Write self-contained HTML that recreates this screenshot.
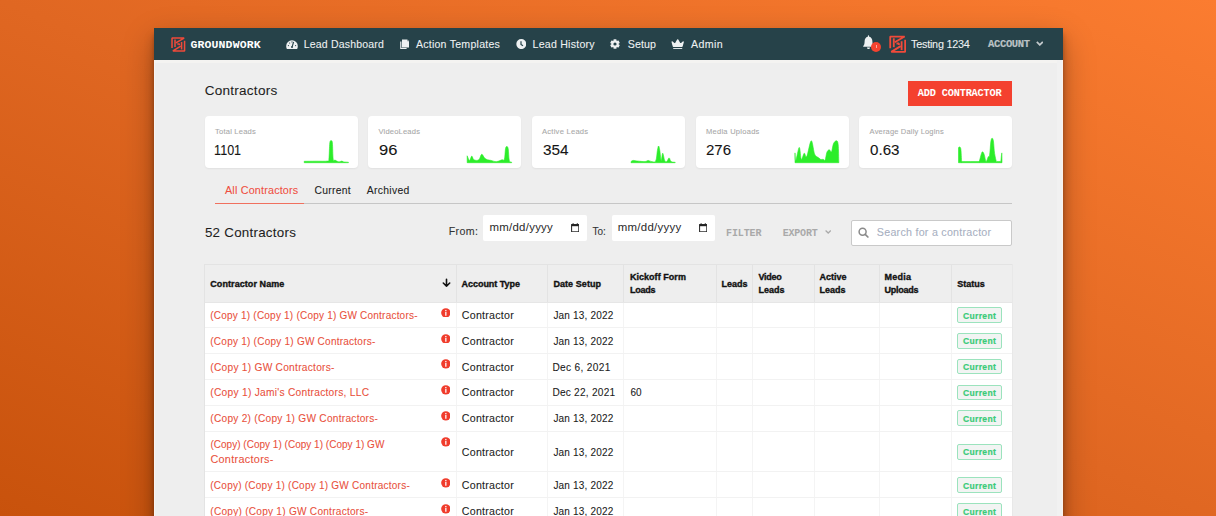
<!DOCTYPE html>
<html><head><meta charset="utf-8">
<style>
html,body{margin:0;padding:0;}
body{width:1216px;height:516px;overflow:hidden;position:relative;font-family:"Liberation Sans",sans-serif;
 background:linear-gradient(to top right,#c8520c 0%,#e06722 50%,#fb7c30 100%);}
.t{position:absolute;white-space:nowrap;line-height:1;}
.a{position:absolute;}
#win{position:absolute;left:154px;top:28px;width:909px;height:520px;background:#eeeeee;
 box-shadow:0 6px 4px rgba(0,0,0,.2),0 8px 10px rgba(0,0,0,.2),0 12px 30px rgba(0,0,0,.28);}
#nav{position:absolute;left:154px;top:28px;width:909px;height:32.2px;background:#264249;}
.card{position:absolute;top:116.1px;width:153.3px;height:52px;background:#fff;border-radius:4px;box-shadow:0 1px 2px rgba(0,0,0,.06);}
.chart{position:absolute;top:141px;width:46px;height:22px;overflow:visible}
.chart path{stroke:#2ced2a;stroke-width:1.1;stroke-linejoin:round}
.chart path.sm{stroke-width:0.6}
.inp{position:absolute;top:214.6px;height:26px;background:#fff;border-radius:2px;}
.cal{position:absolute;top:224.3px;width:8px;height:8px;}
.hd{position:absolute;top:264.4px;height:38px;background:#eeeeee;}
.vl{position:absolute;width:1px;}
.hl{position:absolute;height:1px;left:205px;width:807px;background:#ececec;}
.badge{position:absolute;left:957.2px;width:42.5px;height:13.7px;border:1px solid #9be3bd;border-radius:2px;background:#f2f4f3;}
.info{position:absolute;left:440.5px;width:9.7px;height:9.7px;}
</style></head><body>
<div id="win"></div>
<div id="nav"></div>
<!-- window inner light edges -->
<div class="a" style="left:154px;top:60.4px;width:909px;height:2.2px;background:#f4f3f1"></div>
<div class="a" style="left:154px;top:60.2px;width:1px;height:460px;background:#f8f4f2"></div>
<div class="a" style="left:1057px;top:60.2px;width:5px;height:460px;background:#f1f1f1"></div>
<div class="a" style="left:1062px;top:60.2px;width:1px;height:460px;background:#fbf2ec"></div>

<!-- logo -->
<svg class="a" style="left:171.2px;top:36.8px" width="14.6" height="15" viewBox="0 0 20 20">
 <g fill="none" stroke="#f04a3a" stroke-width="2.1" stroke-linecap="butt" stroke-linejoin="bevel">
  <path d="M1.4 14.8 V1.2 H18 L6.6 7.8"/>
  <path d="M18.6 5 V18.8 H2.6 L13.4 12.2"/>
  <path d="M5.5 3.2 V13.4"/>
  <path d="M14.5 6.6 V16.8"/>
  <path d="M8.6 9.2 H11.4 V11"/>
 </g>
</svg>
<!-- nav icons -->
<svg class="a" style="left:285.6px;top:39.7px" width="12" height="9.4" viewBox="0 0 12 9.4">
 <path d="M6 0.2 A5.8 5.8 0 0 0 0.2 6 A5.8 5.8 0 0 0 1 9.2 H11 A5.8 5.8 0 0 0 11.8 6 A5.8 5.8 0 0 0 6 0.2 Z" fill="#eef1f2"/>
 <path d="M7.6 2 L6.2 6.6" stroke="#264249" stroke-width="1.1"/>
 <circle cx="6" cy="7.1" r="1" fill="#264249"/>
 <circle cx="2.4" cy="5.6" r=".6" fill="#264249"/><circle cx="3.6" cy="3" r=".6" fill="#264249"/>
 <circle cx="9.6" cy="5.6" r=".6" fill="#264249"/><circle cx="6" cy="1.9" r=".6" fill="#264249"/>
</svg>
<svg class="a" style="left:399.6px;top:38.8px" width="9.6" height="10.4" viewBox="0 0 9.6 10.4">
 <path d="M2 0.4 H7.2 L9.2 2.4 V8.6 H2 Z" fill="#eef1f2"/>
 <path d="M7.3 0.4 V2.3 H9.2 Z" fill="#7d8d92"/>
 <path d="M0.2 2.6 H1.4 V8.9 H6.6 V10.2 H0.2 Z" fill="#eef1f2"/>
</svg>
<svg class="a" style="left:515.6px;top:38.9px" width="10.6" height="10.2" viewBox="0 0 10.6 10.2">
 <circle cx="5.3" cy="5.1" r="5" fill="#eef1f2"/>
 <path d="M5 2.2 V5.4 L7 6.8" stroke="#264249" stroke-width="1.2" fill="none"/>
</svg>
<svg class="a" style="left:610.1px;top:38.8px" width="10" height="10" viewBox="-5 -5 10 10">
 <g fill="#eef1f2">
  <circle r="3.4"/>
  <rect x="-1.5" y="-4.8" width="3" height="9.6" rx=".6"/>
  <rect x="-1.5" y="-4.8" width="3" height="9.6" rx=".6" transform="rotate(60)"/>
  <rect x="-1.5" y="-4.8" width="3" height="9.6" rx=".6" transform="rotate(120)"/>
 </g>
 <circle r="1.6" fill="#264249"/>
</svg>
<svg class="a" style="left:671.2px;top:38.6px" width="13.4" height="10.6" viewBox="0 0 13.4 10.6">
 <path d="M1.2 3 L4 5.6 L6.7 0.9 L9.4 5.6 L12.2 3 L11 7.4 H2.4 Z" fill="#eef1f2" stroke="#eef1f2" stroke-width="1.3" stroke-linejoin="round"/>
 <rect x="2.2" y="9.1" width="9" height="1.4" fill="#eef1f2"/>
</svg>
<!-- right nav -->
<svg class="a" style="left:862.6px;top:35.2px" width="11" height="14.2" viewBox="0 0 11 14.2">
 <path d="M5.5 0.3 C5.9 0.3 6.2 .7 6.2 1.2 V1.8 C8.4 2.3 9.4 4.2 9.4 6.4 C9.4 9.2 10.2 10.4 10.8 11 V11.8 H0.2 V11 C0.8 10.4 1.6 9.2 1.6 6.4 C1.6 4.2 2.6 2.3 4.8 1.8 V1.2 C4.8 .7 5.1 .3 5.5 .3 Z" fill="#eef1f2"/>
 <path d="M4 12.6 H7 A1.5 1.5 0 0 1 4 12.6 Z" fill="#eef1f2"/>
</svg>
<div class="a" style="left:871px;top:41.7px;width:10.1px;height:10.1px;border-radius:50%;background:#f4432f"></div>
<div class="a" style="left:875.8px;top:44.8px;width:1px;height:3.4px;background:#fff;opacity:.55"></div>
<svg class="a" style="left:888.6px;top:34.9px" width="17.4" height="18.4" viewBox="0 0 20 20">
 <g fill="none" stroke="#f04a3a" stroke-width="2.1" stroke-linecap="butt" stroke-linejoin="bevel">
  <path d="M1.4 14.8 V1.2 H18 L6.6 7.8"/>
  <path d="M18.6 5 V18.8 H2.6 L13.4 12.2"/>
  <path d="M5.5 3.2 V13.4"/>
  <path d="M14.5 6.6 V16.8"/>
  <path d="M8.6 9.2 H11.4 V11"/>
 </g>
</svg>
<svg class="a" style="left:1035.8px;top:40.8px" width="7.6" height="5.4" viewBox="0 0 7.6 5.4">
 <path d="M0.8 0.9 L3.8 3.9 L6.8 0.9" stroke="#c3c9cc" stroke-width="1.7" fill="none"/>
</svg>

<!-- add contractor -->
<div class="a" style="left:908px;top:81px;width:104px;height:25px;background:#f4412f"></div>

<!-- cards -->
<div class="card" style="left:204.6px"></div>
<div class="card" style="left:368.1px"></div>
<div class="card" style="left:531.5px"></div>
<div class="card" style="left:695.5px"></div>
<div class="card" style="left:859px"></div>
<svg class="chart" style="left:303.8px" viewBox="0 0 46 22"><path class="sm" fill="#2ced2a" d="M0.20 21.70 L0.20 20.30 C2.17 20.28 8.13 20.23 12.00 20.20 C15.87 20.17 21.25 20.42 23.40 20.10 C25.55 19.78 24.50 21.32 24.90 18.30 C25.30 15.28 25.42 5.08 25.80 2.00 C26.18 -1.08 26.77 -0.20 27.20 -0.20 C27.63 -0.20 28.07 -1.08 28.40 2.00 C28.73 5.08 28.77 15.45 29.20 18.30 C29.63 21.15 30.42 18.82 31.00 19.10 C31.58 19.38 32.03 19.70 32.70 20.00 C33.37 20.30 34.17 20.88 35.00 20.90 C35.83 20.92 36.92 20.10 37.70 20.10 C38.48 20.10 38.58 20.72 39.70 20.90 C40.82 21.08 43.62 21.15 44.40 21.20 L44.40 21.70 Z"/></svg>
<svg class="chart" style="left:466.8px" viewBox="0 0 46 22"><path class="sm" fill="#2ced2a" d="M0.18 21.70 L0.18 14.80 C0.57 15.57 1.73 19.35 2.50 19.40 C3.27 19.45 4.07 15.20 4.80 15.10 C5.53 15.00 5.73 18.18 6.90 18.80 C8.07 19.42 10.50 19.72 11.80 18.80 C13.10 17.88 13.73 13.58 14.70 13.30 C15.67 13.02 16.63 16.18 17.60 17.10 C18.57 18.02 19.43 18.42 20.50 18.80 C21.57 19.18 22.73 19.10 24.00 19.40 C25.27 19.70 26.93 20.45 28.10 20.60 C29.27 20.75 29.85 20.60 31.00 20.30 C32.15 20.00 33.93 19.13 35.00 18.80 C36.07 18.47 36.82 20.13 37.40 18.30 C37.98 16.47 38.12 9.92 38.50 7.80 C38.88 5.68 39.25 5.60 39.70 5.60 C40.15 5.60 40.77 5.50 41.20 7.80 C41.63 10.10 41.72 17.17 42.30 19.40 C42.88 21.63 44.30 20.90 44.70 21.20 L44.70 21.70 Z"/></svg>
<svg class="chart" style="left:631px" viewBox="0 0 46 22"><path class="sm" fill="#2ced2a" d="M0.00 21.70 L0.00 20.60 C0.33 20.40 0.93 19.50 2.00 19.40 C3.07 19.30 4.42 19.80 6.40 20.00 C8.38 20.20 12.12 20.70 13.90 20.60 C15.68 20.50 16.03 19.42 17.10 19.40 C18.17 19.38 19.03 20.40 20.30 20.50 C21.57 20.60 23.68 21.83 24.70 20.00 C25.72 18.17 25.92 12.00 26.40 9.50 C26.88 7.00 27.20 5.00 27.60 5.00 C28.00 5.00 28.37 7.10 28.80 9.50 C29.23 11.90 29.72 18.95 30.20 19.40 C30.68 19.85 31.12 12.20 31.70 12.20 C32.28 12.20 33.03 18.00 33.70 19.40 C34.37 20.80 34.97 21.02 35.70 20.60 C36.43 20.18 37.37 16.90 38.10 16.90 C38.83 16.90 39.08 19.87 40.10 20.60 C41.12 21.33 43.52 21.18 44.20 21.30 L44.20 21.70 Z"/></svg>
<svg class="chart" style="left:794.8px" viewBox="0 0 46 22"><path class="sm" fill="#2ced2a" d="M0.00 21.70 L0.00 11.90 C0.13 13.15 0.09 20.32 0.80 19.40 C1.51 18.48 3.33 6.58 4.25 6.40 C5.17 6.22 5.47 17.33 6.30 18.30 C7.12 19.27 8.28 12.70 9.20 12.20 C10.12 11.70 10.63 17.37 11.80 15.30 C12.97 13.23 14.93 0.28 16.20 -0.20 C17.47 -0.68 18.48 9.77 19.40 12.40 C20.32 15.03 20.93 14.82 21.70 15.60 C22.47 16.38 23.32 16.62 24.00 17.10 C24.68 17.58 25.12 18.30 25.80 18.50 C26.48 18.70 27.38 18.20 28.10 18.30 C28.82 18.40 29.47 20.27 30.10 19.10 C30.73 17.93 31.22 13.03 31.90 11.30 C32.58 9.57 33.43 8.80 34.20 8.70 C34.97 8.60 35.78 11.72 36.50 10.70 C37.22 9.68 37.67 4.42 38.50 2.60 C39.33 0.78 40.72 -0.38 41.50 -0.20 C42.28 -0.02 42.82 0.13 43.20 3.70 C43.58 7.27 43.70 18.28 43.80 21.20 L43.80 21.70 Z"/></svg>
<svg class="chart" style="left:957.9px" viewBox="0 0 46 22"><path class="sm" fill="#2ced2a" d="M0.50 21.70 L0.50 6.60 C0.70 6.50 1.30 5.70 1.70 6.00 C2.10 6.30 2.57 5.97 2.90 8.40 C3.23 10.83 3.43 18.57 3.70 20.60 C3.97 22.63 1.72 20.60 4.50 20.60 C7.28 20.60 17.62 20.60 20.40 20.60 C23.18 20.60 20.68 21.97 21.20 20.60 C21.72 19.23 22.88 14.00 23.50 12.40 C24.12 10.80 24.42 10.70 24.90 11.00 C25.38 11.30 25.87 12.60 26.40 14.20 C26.93 15.80 27.47 20.32 28.10 20.60 C28.73 20.88 29.62 16.97 30.20 15.90 C30.78 14.83 31.17 16.68 31.60 14.20 C32.03 11.72 32.40 3.83 32.80 1.00 C33.20 -1.83 33.57 -2.63 34.00 -2.80 C34.43 -2.97 34.97 -2.53 35.40 0.00 C35.83 2.53 36.10 8.97 36.60 12.40 C37.10 15.83 37.97 19.23 38.40 20.60 C38.83 21.97 38.57 20.60 39.20 20.60 C39.83 20.60 41.60 20.60 42.20 20.60 C42.80 20.60 42.53 22.05 42.80 20.60 C43.07 19.15 43.60 11.83 43.80 11.90 C44.00 11.97 43.97 19.48 44.00 21.00 L44.00 21.70 Z"/></svg>

<!-- tabs underline -->
<div class="a" style="left:214.6px;top:202.9px;width:797.8px;height:1.3px;background:#c6c6c6"></div>
<div class="a" style="left:214.6px;top:202.9px;width:89.4px;height:1.3px;background:#f0705e"></div>

<!-- inputs -->
<div class="inp" style="left:483.3px;width:103.4px"></div>
<div class="inp" style="left:611.5px;width:103px"></div>
<svg class="cal" style="left:571px;top:222.8px;width:8.4px;height:9.4px" viewBox="0 0 8.4 9.4"><rect x=".6" y="1.6" width="7.2" height="7.2" fill="none" stroke="#222" stroke-width="1"/><rect x=".6" y="1.4" width="7.2" height="1.8" fill="#222"/><rect x="1.6" y="0.2" width="1" height="1.4" fill="#222"/><rect x="5.8" y="0.2" width="1" height="1.4" fill="#222"/></svg>
<svg class="cal" style="left:698.8px;top:222.8px;width:8.4px;height:9.4px" viewBox="0 0 8.4 9.4"><rect x=".6" y="1.6" width="7.2" height="7.2" fill="none" stroke="#222" stroke-width="1"/><rect x=".6" y="1.4" width="7.2" height="1.8" fill="#222"/><rect x="1.6" y="0.2" width="1" height="1.4" fill="#222"/><rect x="5.8" y="0.2" width="1" height="1.4" fill="#222"/></svg>
<svg class="a" style="left:824.8px;top:230.2px" width="6.4" height="3.6" viewBox="0 0 6.4 3.6"><path d="M0.6 0.6 L3.2 3 L5.8 0.6" stroke="#aaa" stroke-width="1.3" fill="none"/></svg>
<!-- search -->
<div class="a" style="left:851px;top:220px;width:159px;height:24px;background:#fff;border:1px solid #c9c9c9;border-radius:2px"></div>
<svg class="a" style="left:857.6px;top:227px" width="11" height="11" viewBox="0 0 11 11"><circle cx="4.6" cy="4.7" r="3.5" stroke="#8a8a8a" stroke-width="1.5" fill="none"/><path d="M7.2 7.3 L9.9 10" stroke="#8a8a8a" stroke-width="1.7" stroke-linecap="round"/></svg>

<!-- table -->
<div class="hd" style="left:205px;width:807px"></div>
<div class="a" style="left:205px;top:302.5px;width:807px;height:220px;background:#fff"></div>
<div class="a" style="left:204.4px;top:264.4px;width:807.6px;height:1px;background:#e3e3e3"></div>
<div class="a" style="left:204.4px;top:264.4px;width:1px;height:260px;background:#e3e3e3"></div>
<div class="a" style="left:1011.6px;top:264.4px;width:1px;height:260px;background:#e8e8e8"></div>
<svg class="a" style="left:441px;top:278px" width="11" height="10" viewBox="0 0 11 10"><path d="M5.5 1.2 V8.2 M2.3 5 L5.5 8.2 L8.7 5" stroke="#111" stroke-width="1.6" fill="none" stroke-linecap="round" stroke-linejoin="round"/></svg>
<div class="vl" style="left:456.1px;top:264.4px;height:38.1px;background:#e3e3e3"></div>
<div class="vl" style="left:456.1px;top:302.5px;height:220px;background:#f4f4f4"></div>
<div class="vl" style="left:546.8px;top:264.4px;height:38.1px;background:#e3e3e3"></div>
<div class="vl" style="left:546.8px;top:302.5px;height:220px;background:#f4f4f4"></div>
<div class="vl" style="left:622.9px;top:264.4px;height:38.1px;background:#e3e3e3"></div>
<div class="vl" style="left:622.9px;top:302.5px;height:220px;background:#f4f4f4"></div>
<div class="vl" style="left:715.5px;top:264.4px;height:38.1px;background:#e3e3e3"></div>
<div class="vl" style="left:715.5px;top:302.5px;height:220px;background:#f4f4f4"></div>
<div class="vl" style="left:751.9px;top:264.4px;height:38.1px;background:#e3e3e3"></div>
<div class="vl" style="left:751.9px;top:302.5px;height:220px;background:#f4f4f4"></div>
<div class="vl" style="left:814.0px;top:264.4px;height:38.1px;background:#e3e3e3"></div>
<div class="vl" style="left:814.0px;top:302.5px;height:220px;background:#f4f4f4"></div>
<div class="vl" style="left:878.5px;top:264.4px;height:38.1px;background:#e3e3e3"></div>
<div class="vl" style="left:878.5px;top:302.5px;height:220px;background:#f4f4f4"></div>
<div class="vl" style="left:950.8px;top:264.4px;height:38.1px;background:#e3e3e3"></div>
<div class="vl" style="left:950.8px;top:302.5px;height:220px;background:#f4f4f4"></div>
<div class="hl" style="top:302px;background:#e6e6e6"></div>
<div class="hl" style="top:327.14px;background:#f2f2f2"></div>
<svg class="info" style="top:307.80px" viewBox="0 0 10 10"><circle cx="5" cy="5" r="4.85" fill="#f03c2c"/><rect x="4.35" y="2" width="1.3" height="1.3" fill="#fff"/><rect x="4.35" y="4" width="1.3" height="4" fill="#fff"/></svg>
<div class="badge" style="top:307.12px"></div>
<div class="hl" style="top:352.98px;background:#f2f2f2"></div>
<svg class="info" style="top:333.64px" viewBox="0 0 10 10"><circle cx="5" cy="5" r="4.85" fill="#f03c2c"/><rect x="4.35" y="2" width="1.3" height="1.3" fill="#fff"/><rect x="4.35" y="4" width="1.3" height="4" fill="#fff"/></svg>
<div class="badge" style="top:332.96px"></div>
<div class="hl" style="top:378.82px;background:#f2f2f2"></div>
<svg class="info" style="top:359.48px" viewBox="0 0 10 10"><circle cx="5" cy="5" r="4.85" fill="#f03c2c"/><rect x="4.35" y="2" width="1.3" height="1.3" fill="#fff"/><rect x="4.35" y="4" width="1.3" height="4" fill="#fff"/></svg>
<div class="badge" style="top:358.80px"></div>
<div class="hl" style="top:404.66px;background:#f2f2f2"></div>
<svg class="info" style="top:385.32px" viewBox="0 0 10 10"><circle cx="5" cy="5" r="4.85" fill="#f03c2c"/><rect x="4.35" y="2" width="1.3" height="1.3" fill="#fff"/><rect x="4.35" y="4" width="1.3" height="4" fill="#fff"/></svg>
<div class="badge" style="top:384.64px"></div>
<div class="hl" style="top:430.50px;background:#f2f2f2"></div>
<svg class="info" style="top:411.16px" viewBox="0 0 10 10"><circle cx="5" cy="5" r="4.85" fill="#f03c2c"/><rect x="4.35" y="2" width="1.3" height="1.3" fill="#fff"/><rect x="4.35" y="4" width="1.3" height="4" fill="#fff"/></svg>
<div class="badge" style="top:410.48px"></div>
<div class="hl" style="top:471.40px;background:#f2f2f2"></div>
<svg class="info" style="top:437.00px" viewBox="0 0 10 10"><circle cx="5" cy="5" r="4.85" fill="#f03c2c"/><rect x="4.35" y="2" width="1.3" height="1.3" fill="#fff"/><rect x="4.35" y="4" width="1.3" height="4" fill="#fff"/></svg>
<div class="badge" style="top:443.85px"></div>
<div class="hl" style="top:497.40px;background:#f2f2f2"></div>
<svg class="info" style="top:477.90px" viewBox="0 0 10 10"><circle cx="5" cy="5" r="4.85" fill="#f03c2c"/><rect x="4.35" y="2" width="1.3" height="1.3" fill="#fff"/><rect x="4.35" y="4" width="1.3" height="4" fill="#fff"/></svg>
<div class="badge" style="top:477.30px"></div>
<div class="hl" style="top:523.40px;background:#f2f2f2"></div>
<svg class="info" style="top:503.90px" viewBox="0 0 10 10"><circle cx="5" cy="5" r="4.85" fill="#f03c2c"/><rect x="4.35" y="2" width="1.3" height="1.3" fill="#fff"/><rect x="4.35" y="4" width="1.3" height="4" fill="#fff"/></svg>
<div class="badge" style="top:503.30px"></div>
<div class="t" style="left:190.40px;top:38.91px;font-size:11.5px;font-weight:700;color:#ffffff;font-family:'Liberation Mono';letter-spacing:0.144px;">GROUNDWORK</div>
<div class="t" style="left:303.70px;top:39.03px;font-size:10.52px;font-weight:400;color:#eef1f2;-webkit-text-stroke:0.08px #eef1f2;letter-spacing:0.185px;transform:scaleY(0.9980);transform-origin:0 0;">Lead Dashboard</div>
<div class="t" style="left:415.90px;top:39.03px;font-size:10.6px;font-weight:400;color:#eef1f2;-webkit-text-stroke:0.08px #eef1f2;letter-spacing:0.233px;transform:scaleY(0.9907);transform-origin:0 0;">Action Templates</div>
<div class="t" style="left:532.60px;top:39.03px;font-size:10.62px;font-weight:400;color:#eef1f2;-webkit-text-stroke:0.08px #eef1f2;letter-spacing:0.218px;transform:scaleY(0.9889);transform-origin:0 0;">Lead History</div>
<div class="t" style="left:627.70px;top:39.03px;font-size:10.66px;font-weight:400;color:#eef1f2;-webkit-text-stroke:0.08px #eef1f2;letter-spacing:0.100px;transform:scaleY(0.9854);transform-origin:0 0;">Setup</div>
<div class="t" style="left:691.10px;top:39.03px;font-size:10.64px;font-weight:400;color:#eef1f2;-webkit-text-stroke:0.08px #eef1f2;letter-spacing:0.350px;transform:scaleY(0.9868);transform-origin:0 0;">Admin</div>
<div class="t" style="left:911.10px;top:38.60px;font-size:10.8px;font-weight:400;color:#eef1f2;-webkit-text-stroke:0.08px #eef1f2;letter-spacing:-0.236px;">Testing 1234</div>
<div class="t" style="left:988.00px;top:39.03px;font-size:10.5px;font-weight:700;color:#bcc2c5;font-family:'Liberation Mono';-webkit-text-stroke:0.15px #bcc2c5;letter-spacing:-0.333px;">ACCOUNT</div>
<div class="t" style="left:204.70px;top:84.54px;font-size:13.55px;font-weight:400;color:#1e1e1e;-webkit-text-stroke:0.08px #1e1e1e;letter-spacing:0.250px;transform:scaleY(0.8857);transform-origin:0 0;">Contractors</div>
<div class="t" style="left:215.00px;top:128.22px;font-size:7.6px;font-weight:400;color:#a8a8a8;-webkit-text-stroke:0.08px #a8a8a8;letter-spacing:0.200px;transform:scaleY(0.9870);transform-origin:0 0;">Total Leads</div>
<div class="t" style="left:378.50px;top:128.22px;font-size:7.57px;font-weight:400;color:#a8a8a8;-webkit-text-stroke:0.08px #a8a8a8;letter-spacing:0.178px;transform:scaleY(0.9911);transform-origin:0 0;">VideoLeads</div>
<div class="t" style="left:542.00px;top:128.22px;font-size:7.63px;font-weight:400;color:#a8a8a8;-webkit-text-stroke:0.08px #a8a8a8;letter-spacing:0.227px;transform:scaleY(0.9829);transform-origin:0 0;">Active Leads</div>
<div class="t" style="left:706.00px;top:128.22px;font-size:7.53px;font-weight:400;color:#a8a8a8;-webkit-text-stroke:0.08px #a8a8a8;letter-spacing:0.267px;transform:scaleY(0.9960);transform-origin:0 0;">Media Uploads</div>
<div class="t" style="left:869.60px;top:128.22px;font-size:7.5px;font-weight:400;color:#a8a8a8;-webkit-text-stroke:0.08px #a8a8a8;letter-spacing:0.174px;">Average Daily Logins</div>
<div class="t" style="left:213.60px;top:143.48px;font-size:14.0px;font-weight:400;color:#151515;-webkit-text-stroke:0.08px #151515;transform:scaleX(0.8966);transform-origin:1px 0;">1101</div>
<div class="t" style="left:378.60px;top:143.48px;font-size:14.0px;font-weight:400;color:#151515;-webkit-text-stroke:0.08px #151515;transform:scaleX(1.1800);transform-origin:0px 0;">96</div>
<div class="t" style="left:542.50px;top:143.48px;font-size:14.0px;font-weight:400;color:#151515;-webkit-text-stroke:0.08px #151515;transform:scaleX(1.0957);transform-origin:0px 0;">354</div>
<div class="t" style="left:706.00px;top:143.48px;font-size:14.0px;font-weight:400;color:#151515;-webkit-text-stroke:0.08px #151515;transform:scaleX(1.0739);transform-origin:0px 0;">276</div>
<div class="t" style="left:869.80px;top:143.48px;font-size:14.0px;font-weight:400;color:#151515;-webkit-text-stroke:0.08px #151515;transform:scaleX(1.0815);transform-origin:0px 0;">0.63</div>
<div class="t" style="left:225.00px;top:185.50px;font-size:10.78px;font-weight:400;color:#ee4f3f;-webkit-text-stroke:0.08px #ee4f3f;letter-spacing:0.186px;transform:scaleY(0.9272);transform-origin:0 0;">All Contractors</div>
<div class="t" style="left:314.40px;top:185.50px;font-size:10.35px;font-weight:400;color:#222222;-webkit-text-stroke:0.08px #222222;letter-spacing:0.283px;transform:scaleY(0.9659);transform-origin:0 0;">Current</div>
<div class="t" style="left:366.80px;top:185.50px;font-size:10.37px;font-weight:400;color:#222222;-webkit-text-stroke:0.08px #222222;letter-spacing:0.314px;transform:scaleY(0.9642);transform-origin:0 0;">Archived</div>
<div class="t" style="left:204.90px;top:227.34px;font-size:13.37px;font-weight:400;color:#1e1e1e;-webkit-text-stroke:0.08px #1e1e1e;letter-spacing:0.254px;transform:scaleY(0.8972);transform-origin:0 0;">52 Contractors</div>
<div class="t" style="left:448.70px;top:226.70px;font-size:10.64px;font-weight:400;color:#333333;-webkit-text-stroke:0.08px #333333;letter-spacing:0.400px;transform:scaleY(0.9398);transform-origin:0 0;">From:</div>
<div class="t" style="left:592.40px;top:226.70px;font-size:10.0px;font-weight:400;color:#333333;-webkit-text-stroke:0.08px #333333;letter-spacing:0.000px;">To:</div>
<div class="t" style="left:489.50px;top:223.13px;font-size:11.45px;font-weight:400;color:#2a2a2a;-webkit-text-stroke:0.01px #2a2a2a;letter-spacing:0.256px;transform:scaleY(0.9173);transform-origin:0 0;">mm/dd/yyyy</div>
<div class="t" style="left:617.80px;top:223.13px;font-size:11.45px;font-weight:400;color:#2a2a2a;-webkit-text-stroke:0.01px #2a2a2a;letter-spacing:0.256px;transform:scaleY(0.9173);transform-origin:0 0;">mm/dd/yyyy</div>
<div class="t" style="left:726.10px;top:228.50px;font-size:10.0px;font-weight:700;color:#a9a9a9;font-family:'Liberation Mono';letter-spacing:-0.120px;">FILTER</div>
<div class="t" style="left:782.70px;top:228.50px;font-size:10.0px;font-weight:700;color:#a9a9a9;font-family:'Liberation Mono';letter-spacing:-0.200px;">EXPORT</div>
<div class="t" style="left:876.80px;top:228.00px;font-size:10.7px;font-weight:400;color:#a7afbf;-webkit-text-stroke:0.08px #a7afbf;letter-spacing:0.255px;transform:scaleY(0.9349);transform-origin:0 0;">Search for a contractor</div>
<div class="t" style="left:210.30px;top:279.83px;font-size:9.0px;font-weight:700;color:#111111;-webkit-text-stroke:0.35px #111111;letter-spacing:0.071px;">Contractor Name</div>
<div class="t" style="left:461.60px;top:279.83px;font-size:9.0px;font-weight:700;color:#111111;-webkit-text-stroke:0.35px #111111;letter-spacing:-0.045px;">Account Type</div>
<div class="t" style="left:553.40px;top:279.83px;font-size:9.0px;font-weight:700;color:#111111;-webkit-text-stroke:0.35px #111111;letter-spacing:0.067px;">Date Setup</div>
<div class="t" style="left:629.90px;top:272.93px;font-size:9.0px;font-weight:700;color:#111111;-webkit-text-stroke:0.35px #111111;letter-spacing:0.045px;">Kickoff Form</div>
<div class="t" style="left:629.90px;top:285.93px;font-size:9.0px;font-weight:700;color:#111111;-webkit-text-stroke:0.35px #111111;letter-spacing:-0.250px;">Loads</div>
<div class="t" style="left:721.50px;top:279.83px;font-size:9.0px;font-weight:700;color:#111111;-webkit-text-stroke:0.35px #111111;letter-spacing:0.000px;">Leads</div>
<div class="t" style="left:758.40px;top:272.93px;font-size:9.0px;font-weight:700;color:#111111;-webkit-text-stroke:0.35px #111111;letter-spacing:-0.250px;">Video</div>
<div class="t" style="left:758.40px;top:285.93px;font-size:9.0px;font-weight:700;color:#111111;-webkit-text-stroke:0.35px #111111;letter-spacing:0.000px;">Leads</div>
<div class="t" style="left:819.60px;top:272.93px;font-size:9.0px;font-weight:700;color:#111111;-webkit-text-stroke:0.35px #111111;letter-spacing:0.000px;">Active</div>
<div class="t" style="left:819.60px;top:285.93px;font-size:9.0px;font-weight:700;color:#111111;-webkit-text-stroke:0.35px #111111;letter-spacing:0.000px;">Leads</div>
<div class="t" style="left:884.60px;top:272.93px;font-size:9.0px;font-weight:700;color:#111111;-webkit-text-stroke:0.35px #111111;letter-spacing:0.250px;">Media</div>
<div class="t" style="left:884.60px;top:285.93px;font-size:9.0px;font-weight:700;color:#111111;-webkit-text-stroke:0.35px #111111;letter-spacing:-0.267px;">Uploads</div>
<div class="t" style="left:957.30px;top:279.83px;font-size:9.0px;font-weight:700;color:#111111;-webkit-text-stroke:0.35px #111111;letter-spacing:0.000px;">Status</div>
<div class="t" style="left:210.30px;top:310.90px;font-size:10.0px;font-weight:400;color:#e9503c;-webkit-text-stroke:0.08px #e9503c;letter-spacing:0.215px;">(Copy 1) (Copy 1) (Copy 1) GW Contractors-</div>
<div class="t" style="left:461.80px;top:310.90px;font-size:10.65px;font-weight:400;color:#1a1a1a;-webkit-text-stroke:0.08px #1a1a1a;letter-spacing:0.256px;transform:scaleY(0.9391);transform-origin:0 0;">Contractor</div>
<div class="t" style="left:553.40px;top:310.90px;font-size:10.0px;font-weight:400;color:#1a1a1a;-webkit-text-stroke:0.08px #1a1a1a;letter-spacing:0.182px;">Jan 13, 2022</div>
<div class="t" style="left:210.30px;top:336.74px;font-size:10.03px;font-weight:400;color:#e9503c;-webkit-text-stroke:0.08px #e9503c;letter-spacing:0.234px;transform:scaleY(0.9968);transform-origin:0 0;">(Copy 1) (Copy 1) GW Contractors-</div>
<div class="t" style="left:461.80px;top:336.74px;font-size:10.65px;font-weight:400;color:#1a1a1a;-webkit-text-stroke:0.08px #1a1a1a;letter-spacing:0.256px;transform:scaleY(0.9391);transform-origin:0 0;">Contractor</div>
<div class="t" style="left:553.40px;top:336.74px;font-size:10.0px;font-weight:400;color:#1a1a1a;-webkit-text-stroke:0.08px #1a1a1a;letter-spacing:0.182px;">Jan 13, 2022</div>
<div class="t" style="left:210.30px;top:362.58px;font-size:10.19px;font-weight:400;color:#e9503c;-webkit-text-stroke:0.08px #e9503c;letter-spacing:0.261px;transform:scaleY(0.9810);transform-origin:0 0;">(Copy 1) GW Contractors-</div>
<div class="t" style="left:461.80px;top:362.58px;font-size:10.65px;font-weight:400;color:#1a1a1a;-webkit-text-stroke:0.08px #1a1a1a;letter-spacing:0.256px;transform:scaleY(0.9391);transform-origin:0 0;">Contractor</div>
<div class="t" style="left:552.40px;top:362.58px;font-size:10.15px;font-weight:400;color:#1a1a1a;-webkit-text-stroke:0.08px #1a1a1a;letter-spacing:0.330px;transform:scaleY(0.9851);transform-origin:0 0;">Dec 6, 2021</div>
<div class="t" style="left:210.30px;top:388.42px;font-size:10.22px;font-weight:400;color:#e9503c;-webkit-text-stroke:0.08px #e9503c;letter-spacing:0.258px;transform:scaleY(0.9784);transform-origin:0 0;">(Copy 1) Jami's Contractors, LLC</div>
<div class="t" style="left:461.80px;top:388.42px;font-size:10.65px;font-weight:400;color:#1a1a1a;-webkit-text-stroke:0.08px #1a1a1a;letter-spacing:0.256px;transform:scaleY(0.9391);transform-origin:0 0;">Contractor</div>
<div class="t" style="left:552.40px;top:388.42px;font-size:10.13px;font-weight:400;color:#1a1a1a;-webkit-text-stroke:0.08px #1a1a1a;letter-spacing:0.227px;transform:scaleY(0.9872);transform-origin:0 0;">Dec 22, 2021</div>
<div class="t" style="left:630.40px;top:388.42px;font-size:10.0px;font-weight:400;color:#1a1a1a;-webkit-text-stroke:0.08px #1a1a1a;letter-spacing:0.000px;">60</div>
<div class="t" style="left:210.30px;top:414.26px;font-size:10.15px;font-weight:400;color:#e9503c;-webkit-text-stroke:0.08px #e9503c;letter-spacing:0.263px;transform:scaleY(0.9849);transform-origin:0 0;">(Copy 2) (Copy 1) GW Contractors-</div>
<div class="t" style="left:461.80px;top:414.26px;font-size:10.65px;font-weight:400;color:#1a1a1a;-webkit-text-stroke:0.08px #1a1a1a;letter-spacing:0.256px;transform:scaleY(0.9391);transform-origin:0 0;">Contractor</div>
<div class="t" style="left:553.40px;top:414.26px;font-size:10.0px;font-weight:400;color:#1a1a1a;-webkit-text-stroke:0.08px #1a1a1a;letter-spacing:0.182px;">Jan 13, 2022</div>
<div class="t" style="left:210.40px;top:440.20px;font-size:10.0px;font-weight:400;color:#e9503c;-webkit-text-stroke:0.08px #e9503c;letter-spacing:0.017px;">(Copy) (Copy 1) (Copy 1) (Copy 1) GW</div>
<div class="t" style="left:210.40px;top:455.30px;font-size:10.85px;font-weight:400;color:#e9503c;-webkit-text-stroke:0.08px #e9503c;letter-spacing:0.309px;transform:scaleY(0.9220);transform-origin:0 0;">Contractors-</div>
<div class="t" style="left:461.80px;top:447.65px;font-size:10.65px;font-weight:400;color:#1a1a1a;-webkit-text-stroke:0.08px #1a1a1a;letter-spacing:0.256px;transform:scaleY(0.9391);transform-origin:0 0;">Contractor</div>
<div class="t" style="left:553.40px;top:447.65px;font-size:10.0px;font-weight:400;color:#1a1a1a;-webkit-text-stroke:0.08px #1a1a1a;letter-spacing:0.182px;">Jan 13, 2022</div>
<div class="t" style="left:210.30px;top:481.00px;font-size:10.0px;font-weight:400;color:#e9503c;-webkit-text-stroke:0.08px #e9503c;letter-spacing:0.241px;">(Copy) (Copy 1) (Copy 1) GW Contractors-</div>
<div class="t" style="left:461.80px;top:481.00px;font-size:10.65px;font-weight:400;color:#1a1a1a;-webkit-text-stroke:0.08px #1a1a1a;letter-spacing:0.256px;transform:scaleY(0.9391);transform-origin:0 0;">Contractor</div>
<div class="t" style="left:553.40px;top:481.00px;font-size:10.0px;font-weight:400;color:#1a1a1a;-webkit-text-stroke:0.08px #1a1a1a;letter-spacing:0.182px;">Jan 13, 2022</div>
<div class="t" style="left:210.30px;top:507.00px;font-size:10.12px;font-weight:400;color:#e9503c;-webkit-text-stroke:0.08px #e9503c;letter-spacing:0.243px;transform:scaleY(0.9881);transform-origin:0 0;">(Copy) (Copy 1) GW Contractors-</div>
<div class="t" style="left:461.80px;top:507.00px;font-size:10.65px;font-weight:400;color:#1a1a1a;-webkit-text-stroke:0.08px #1a1a1a;letter-spacing:0.256px;transform:scaleY(0.9391);transform-origin:0 0;">Contractor</div>
<div class="t" style="left:553.40px;top:507.00px;font-size:10.0px;font-weight:400;color:#1a1a1a;-webkit-text-stroke:0.08px #1a1a1a;letter-spacing:0.182px;">Jan 13, 2022</div>
<div class="t" style="left:917.80px;top:88.16px;font-size:10.3px;font-weight:700;color:#ffffff;font-family:'Liberation Mono';letter-spacing:-0.200px;">ADD CONTRACTOR</div>
<div class="t" style="left:963.00px;top:311.63px;font-size:8.54px;font-weight:700;color:#3acb78;-webkit-text-stroke:0.2px #3acb78;letter-spacing:0.333px;transform:scaleY(0.9841);transform-origin:0 0;">Current</div>
<div class="t" style="left:963.00px;top:337.47px;font-size:8.54px;font-weight:700;color:#3acb78;-webkit-text-stroke:0.2px #3acb78;letter-spacing:0.333px;transform:scaleY(0.9841);transform-origin:0 0;">Current</div>
<div class="t" style="left:963.00px;top:363.31px;font-size:8.54px;font-weight:700;color:#3acb78;-webkit-text-stroke:0.2px #3acb78;letter-spacing:0.333px;transform:scaleY(0.9841);transform-origin:0 0;">Current</div>
<div class="t" style="left:963.00px;top:389.15px;font-size:8.54px;font-weight:700;color:#3acb78;-webkit-text-stroke:0.2px #3acb78;letter-spacing:0.333px;transform:scaleY(0.9841);transform-origin:0 0;">Current</div>
<div class="t" style="left:963.00px;top:414.99px;font-size:8.54px;font-weight:700;color:#3acb78;-webkit-text-stroke:0.2px #3acb78;letter-spacing:0.333px;transform:scaleY(0.9841);transform-origin:0 0;">Current</div>
<div class="t" style="left:963.00px;top:448.36px;font-size:8.54px;font-weight:700;color:#3acb78;-webkit-text-stroke:0.2px #3acb78;letter-spacing:0.333px;transform:scaleY(0.9841);transform-origin:0 0;">Current</div>
<div class="t" style="left:963.00px;top:481.81px;font-size:8.54px;font-weight:700;color:#3acb78;-webkit-text-stroke:0.2px #3acb78;letter-spacing:0.333px;transform:scaleY(0.9841);transform-origin:0 0;">Current</div>
<div class="t" style="left:963.00px;top:507.81px;font-size:8.54px;font-weight:700;color:#3acb78;-webkit-text-stroke:0.2px #3acb78;letter-spacing:0.333px;transform:scaleY(0.9841);transform-origin:0 0;">Current</div>
</body></html>
